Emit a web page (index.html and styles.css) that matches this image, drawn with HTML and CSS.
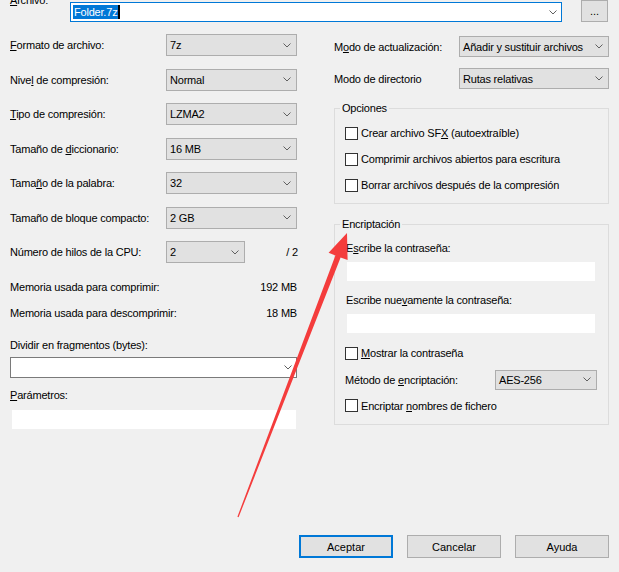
FILE: index.html
```html
<!DOCTYPE html>
<html lang="es">
<head>
<meta charset="utf-8">
<title>Añadir al archivo</title>
<link rel="stylesheet" href="styles.css">
</head>
<body>
<div class="dialog">
  <div class="top">
    <span class="top-label"><u>A</u>rchivo:</span>
    <div class="file">
      <span class="sel">Folder.7z</span><span class="caret"></span>
      <svg class="chev" width="8" height="5" viewBox="0 0 8 5"><polyline points="0.5,0.5 4,4 7.5,0.5"/></svg>
    </div>
    <button class="btn browse">...</button>
  </div>

  <div class="main">
    <div class="left">
      <div class="row"><span class="lbl"><u>F</u>ormato de archivo:</span><div class="select"><span>7z</span><svg class="chev" width="8" height="5" viewBox="0 0 8 5"><polyline points="0.5,0.5 4,4 7.5,0.5"/></svg></div></div>
      <div class="row"><span class="lbl">Nive<u>l</u> de compresión:</span><div class="select"><span>Normal</span><svg class="chev" width="8" height="5" viewBox="0 0 8 5"><polyline points="0.5,0.5 4,4 7.5,0.5"/></svg></div></div>
      <div class="row"><span class="lbl"><u>T</u>ipo de compresión:</span><div class="select"><span>LZMA2</span><svg class="chev" width="8" height="5" viewBox="0 0 8 5"><polyline points="0.5,0.5 4,4 7.5,0.5"/></svg></div></div>
      <div class="row"><span class="lbl">Tamaño de <u>d</u>iccionario:</span><div class="select"><span>16 MB</span><svg class="chev" width="8" height="5" viewBox="0 0 8 5"><polyline points="0.5,0.5 4,4 7.5,0.5"/></svg></div></div>
      <div class="row"><span class="lbl">Tama<u>ñ</u>o de la palabra:</span><div class="select"><span>32</span><svg class="chev" width="8" height="5" viewBox="0 0 8 5"><polyline points="0.5,0.5 4,4 7.5,0.5"/></svg></div></div>
      <div class="row"><span class="lbl">Tamaño de bloque compacto:</span><div class="select"><span>2 GB</span><svg class="chev" width="8" height="5" viewBox="0 0 8 5"><polyline points="0.5,0.5 4,4 7.5,0.5"/></svg></div></div>
      <div class="row"><span class="lbl">Número de hilos de la CPU:</span><div class="select narrow"><span>2</span><svg class="chev" width="8" height="5" viewBox="0 0 8 5"><polyline points="0.5,0.5 4,4 7.5,0.5"/></svg></div><span class="total">/ 2</span></div>

      <div class="info first"><span>Memoria usada para comprimir:</span><span>192 MB</span></div>
      <div class="info"><span>Memoria usada para descomprimir:</span><span>18 MB</span></div>

      <div class="field-label split">Dividir en fra<u>g</u>mentos (bytes):</div>
      <div class="combo-input"><svg class="chev" width="8" height="5" viewBox="0 0 8 5"><polyline points="0.5,0.5 4,4 7.5,0.5"/></svg></div>

      <div class="field-label params"><u>P</u>arámetros:</div>
      <div class="param-field"></div>
    </div>

    <div class="right">
      <div class="rrow first"><span class="rlbl">M<u>o</u>do de actualización:</span><div class="select wide"><span>Añadir y sustituir archivos</span><svg class="chev" width="8" height="5" viewBox="0 0 8 5"><polyline points="0.5,0.5 4,4 7.5,0.5"/></svg></div></div>
      <div class="rrow"><span class="rlbl">Modo de directorio</span><div class="select wide"><span>Rutas relativas</span><svg class="chev" width="8" height="5" viewBox="0 0 8 5"><polyline points="0.5,0.5 4,4 7.5,0.5"/></svg></div></div>

      <div class="group options">
        <span class="group-title">Opciones</span>
        <div class="check first"><span class="box"></span><span>Crear archivo SF<u>X</u> (autoextraíble)</span></div>
        <div class="check"><span class="box"></span><span>Comprimir archivos abiertos para escritura</span></div>
        <div class="check"><span class="box"></span><span>Borrar archivos después de la compresión</span></div>
      </div>

      <div class="group crypt">
        <span class="group-title">Encriptación</span>
        <div class="clabel first">E<u>s</u>cribe la contraseña:</div>
        <div class="pwd"></div>
        <div class="clabel">Escribe nue<u>v</u>amente la contraseña:</div>
        <div class="pwd"></div>
        <div class="check show"><span class="box"></span><span><u>M</u>ostrar la contraseña</span></div>
        <div class="method"><span class="mlbl">Método de <u>e</u>ncriptación:</span><div class="select method-select"><span>AES-256</span><svg class="chev" width="8" height="5" viewBox="0 0 8 5"><polyline points="0.5,0.5 4,4 7.5,0.5"/></svg></div></div>
        <div class="check names"><span class="box"></span><span>Encriptar <u>n</u>ombres de fichero</span></div>
      </div>
    </div>
  </div>

  <div class="buttons">
    <button class="btn action default">Aceptar</button>
    <button class="btn action">Cancelar</button>
    <button class="btn action">Ayuda</button>
  </div>

  <svg class="arrow" width="619" height="572" viewBox="0 0 619 572">
    <polygon points="347,233 347.6,260 340.6,257.4 238.6,517.2 237.4,516.8 335.4,255.4 328.6,252.8"/>
  </svg>
</div>
</body>
</html>
```

FILE: styles.css
```css
html, body {
  margin: 0;
  padding: 0;
}

body {
  background: #f0f0f0;
  font-family: "Liberation Sans", Arial, sans-serif;
  font-size: 11px;
  letter-spacing: -0.2px;
  color: #000;
}

u {
  text-decoration: underline;
  text-underline-offset: 1px;
}

.dialog {
  position: relative;
  width: 619px;
  height: 572px;
  overflow: hidden;
  display: flex;
  flex-direction: column;
}

.chev {
  flex: none;
  fill: none;
  stroke: #606060;
  stroke-width: 1;
}

/* top row */
.top {
  display: flex;
  align-items: flex-start;
  padding: 2px 0 0 10px;
}

.top-label {
  width: 60px;
  margin-top: -9px;
  line-height: 14px;
}

.file {
  box-sizing: border-box;
  width: 492px;
  height: 20px;
  border: 1px solid #0078d7;
  background: #fff;
  display: flex;
  align-items: center;
  padding-left: 2px;
}

.file .sel {
  background: #0078d7;
  color: #fff;
  line-height: 14px;
  padding: 0 1px;
}

.file .caret {
  width: 2px;
  height: 14px;
  background: #000;
}

.file .chev {
  margin-left: auto;
  margin-right: 4px;
}

.btn {
  box-sizing: border-box;
  background: #e1e1e1;
  border: 1px solid #adadad;
  font: inherit;
  color: #000;
  padding: 0;
  margin: 0;
}

.browse {
  margin: -2px 0 0 19px;
  width: 27px;
  height: 22px;
  line-height: 14px;
}

/* main area */
.main {
  display: grid;
  grid-template-columns: 287px 275px;
  column-gap: 37px;
  padding-left: 10px;
  margin-top: 12px;
  align-items: start;
}

.left {
  display: flex;
  flex-direction: column;
}

.row {
  height: 22px;
  display: flex;
  align-items: center;
}

.row + .row {
  margin-top: 12.5px;
}

.lbl {
  width: 156px;
  flex: none;
}

.select {
  box-sizing: border-box;
  width: 131px;
  height: 22px;
  border: 1px solid #adadad;
  background: #e1e1e1;
  display: flex;
  align-items: center;
  padding: 0 5px 0 3px;
  white-space: nowrap;
}

.select span {
  flex: 1;
}

.select.narrow {
  width: 79px;
}

.total {
  margin-left: auto;
  margin-right: -1px;
}

.info {
  display: flex;
  justify-content: space-between;
  line-height: 14px;
  margin-top: 12px;
}

.info.first {
  margin-top: 17px;
}

.field-label {
  line-height: 14px;
}

.field-label.split {
  margin-top: 17.5px;
}

.combo-input {
  box-sizing: border-box;
  margin-top: 5px;
  height: 21px;
  border: 1px solid #7a7a7a;
  background: #fff;
  display: flex;
  align-items: center;
  justify-content: flex-end;
  padding-right: 4px;
}

.field-label.params {
  margin-top: 10.5px;
}

.param-field {
  margin: 7.5px 0 0 2px;
  width: 284px;
  height: 19px;
  background: #fff;
}

/* right column */
.right {
  display: flex;
  flex-direction: column;
}

.rrow {
  height: 21px;
  display: flex;
  align-items: center;
  margin-top: 11px;
}

.rrow.first {
  margin-top: 2px;
}

.rlbl {
  width: 125px;
  flex: none;
}

.select.wide {
  width: 150px;
  height: 21px;
}

.group {
  border: 1px solid #dcdcdc;
  display: flex;
  flex-direction: column;
  padding: 0 0 0 10px;
}

.group-title {
  align-self: flex-start;
  margin: -8px 0 0 -5px;
  padding: 0 2px;
  line-height: 14px;
  background: #f0f0f0;
}

.options {
  margin-top: 19px;
  height: 96px;
  box-sizing: border-box;
}

.check {
  display: flex;
  align-items: center;
  height: 16px;
  margin-top: 10px;
  white-space: nowrap;
}

.options .check.first {
  margin-top: 10px;
}

.box {
  box-sizing: border-box;
  width: 13px;
  height: 13px;
  border: 1px solid #333;
  background: #fff;
  margin-right: 3px;
  flex: none;
}

.crypt {
  margin-top: 20px;
  height: 201px;
  box-sizing: border-box;
}

.clabel {
  line-height: 14px;
  margin-top: 11.5px;
  margin-left: 1px;
}

.clabel.first {
  margin-top: 10px;
}

.pwd {
  margin: 7px 0 0 2px;
  width: 248px;
  height: 19px;
  background: #fff;
}

.check.show {
  margin-top: 12.5px;
}

.method {
  display: flex;
  align-items: center;
  height: 20px;
  margin-top: 8.5px;
}

.mlbl {
  width: 150px;
  flex: none;
}

.method-select {
  width: 102px;
  height: 20px;
}

.check.names {
  margin-top: 8px;
}

/* bottom buttons */
.buttons {
  margin-top: auto;
  display: flex;
  justify-content: flex-end;
  gap: 14px;
  padding: 0 10px 14px 0;
}

.action {
  width: 94px;
  height: 23px;
}

.action.default {
  border: 2px solid #0078d7;
}

/* red annotation arrow over the dialog */
.arrow {
  position: absolute;
  left: 0;
  top: 0;
  pointer-events: none;
  fill: #f43c3c;
}
```
